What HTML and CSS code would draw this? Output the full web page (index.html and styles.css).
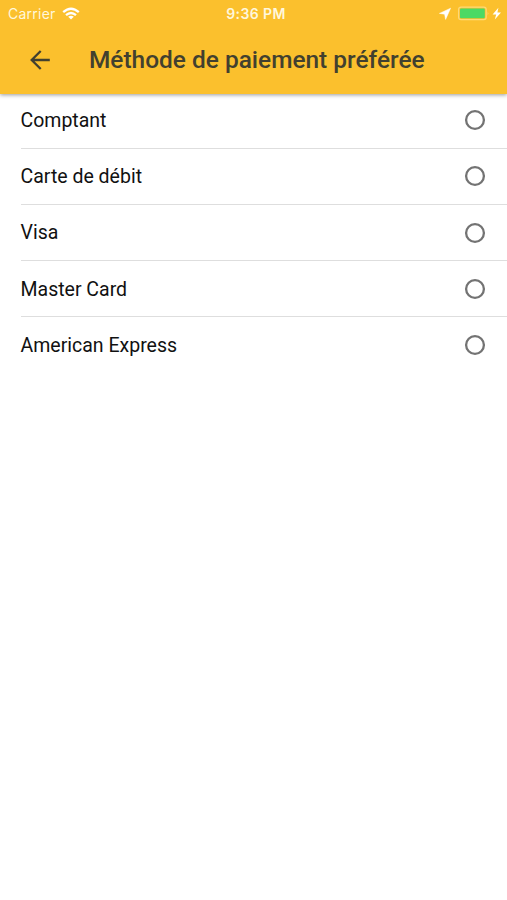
FILE: index.html
```html
<!DOCTYPE html>
<html lang="fr">
<head>
<meta charset="utf-8">
<meta name="viewport" content="width=device-width, initial-scale=1">
<title>Méthode de paiement préférée</title>
<link rel="stylesheet" href="styles.css">
</head>
<body>
<header class="header">
  <div class="status">
    <div class="status-left">
      <span class="carrier">Carrier</span>
      <svg class="wifi" width="18" height="14" viewBox="0 0 18 14" fill="none" stroke="#fff" stroke-width="2.3">
        <path d="M1.2 5.2Q9-1.8 16.8 5.2"/>
        <path d="M4 8.2Q9 3.8 14 8.2"/>
        <path d="M9 12.6L6.2 9.8Q9 7.6 11.8 9.8Z" fill="#fff" stroke="none"/>
      </svg>
    </div>
    <span class="time">9:36 PM</span>
    <div class="status-right">
      <svg width="66" height="16" viewBox="0 0 66 16">
        <path d="M11.6 2.2L.4 7.4L5.6 8.2L6.6 13.4Z" fill="#fff" stroke="#fff" stroke-width=".5"/>
        <rect x="19.6" y="1.2" width="27.6" height="12.4" rx="2.4" fill="none" stroke="#fdd978" stroke-width="1.2"/>
        <rect x="21" y="2.6" width="24.8" height="9.6" rx="1" fill="#4cd964"/>
        <path d="M48.6 5.4Q50.4 7.3 48.6 9.4Z" fill="#fdd978"/>
        <path d="M59.4 1.8L53.6 8.4H57.2L55.8 13.4L62 6.6H58.4Z" fill="#fff"/>
      </svg>
    </div>
  </div>
  <div class="toolbar">
    <svg class="back" width="20" height="20" viewBox="0 0 20 20" fill="none" stroke="#42402f" stroke-width="2.3">
      <path d="M19.8 10H2M10.7 1L1.7 10L10.7 19"/>
    </svg>
    <h1 class="title">Méthode de paiement préférée</h1>
  </div>
</header>
<main class="list">
  <div class="row"><span class="label">Comptant</span><svg class="radio" viewBox="0 0 22 22"><circle cx="11" cy="11" r="8.9"/></svg></div>
  <div class="row"><span class="label">Carte de débit</span><svg class="radio" viewBox="0 0 22 22"><circle cx="11" cy="11" r="8.9"/></svg></div>
  <div class="row"><span class="label">Visa</span><svg class="radio" viewBox="0 0 22 22"><circle cx="11" cy="11" r="8.9"/></svg></div>
  <div class="row"><span class="label">Master Card</span><svg class="radio" viewBox="0 0 22 22"><circle cx="11" cy="11" r="8.9"/></svg></div>
  <div class="row"><span class="label">American Express</span><svg class="radio" viewBox="0 0 22 22"><circle cx="11" cy="11" r="8.9"/></svg></div>
</main>
</body>
</html>
```
FILE: styles.css
```css
* { box-sizing: border-box; }
body {
  margin: 0;
  min-height: 900px;
  background: #fff;
  font-family: Roboto, "Liberation Sans", sans-serif;
}
.header {
  position: relative;
  height: 94px;
  background: #fbc02d;
  box-shadow: 0 1px 4px rgba(0, 0, 0, .4);
}
.status {
  display: grid;
  grid-template-columns: 1fr auto 1fr;
  align-items: center;
  height: 27px;
  padding: 0 2px 0 8px;
  color: #fff7dc;
  font-family: Inter, sans-serif;
  font-size: 14px;
}
.status-left { display: flex; align-items: center; gap: 6.3px; }
.carrier { letter-spacing: .25px; }
.time { margin-right: 1px; font-weight: 600; letter-spacing: .4px; }
.status-right { display: flex; justify-content: flex-end; }
.status svg { display: block; }
.toolbar {
  display: flex;
  align-items: center;
  height: 65px;
  padding-left: 30px;
}
.title {
  margin: 0 0 0 39px;
  color: #42402f;
  font-size: 24.45px;
  font-weight: 500;
  line-height: 28px;
  white-space: nowrap;
}
.list { padding: 0 0 0 20.5px; margin-top: -1.4px; }
.row {
  display: flex;
  align-items: center;
  justify-content: space-between;
  height: 56.2px;
  padding-right: 21px;
  border-bottom: 1px solid #dedede;
  color: #111;
  font-size: 19.5px;
  line-height: 24px;
}
.row:last-child { border-bottom: 0; }
.label { padding-top: 1.5px; }
.radio {
  width: 22px;
  height: 22px;
  fill: none;
  stroke: #737373;
  stroke-width: 2.3;
}
```
